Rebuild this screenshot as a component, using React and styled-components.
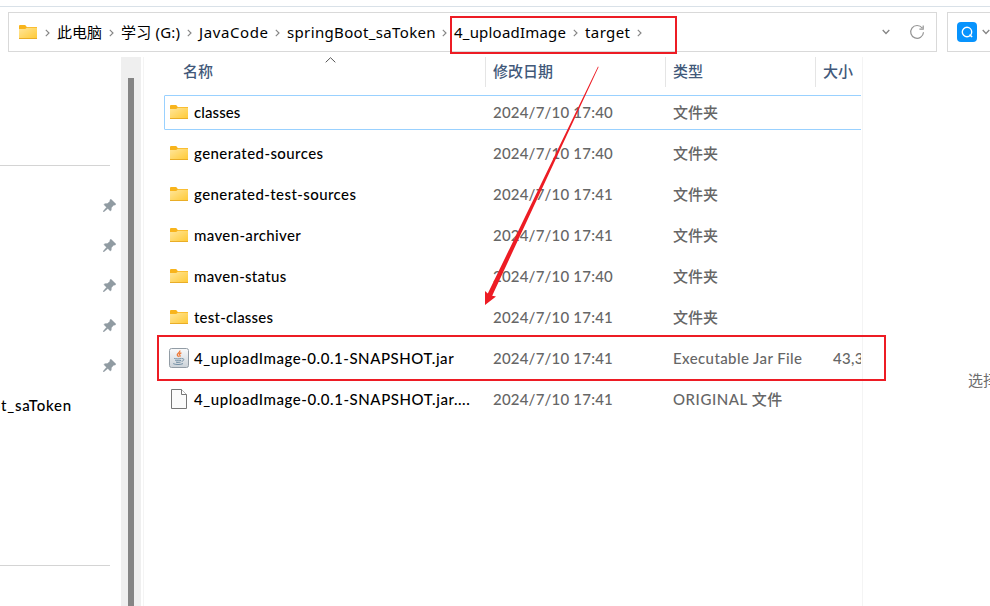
import React from 'react';
import styled, { createGlobalStyle } from 'styled-components';

const GlobalStyle = createGlobalStyle`
  * { box-sizing: border-box; }
  body { margin: 0; background: #fff; overflow: hidden; }
`;

const uiFont = '"Noto Sans", "Noto Sans CJK SC", sans-serif';
const listFont = 'Lato, "Noto Sans CJK SC", sans-serif';

const Explorer = styled.div`
  position: relative;
  width: 990px;
  height: 606px;
  overflow: hidden;
  display: flex;
  flex-direction: column;
  background: #fff;
  color: #000;
  svg { display: block; flex: none; }
`;

const Toolbar = styled.header`
  flex: none;
  height: 57px;
  padding: 5px 0 5px 8px;
  display: flex;
  gap: 10px;
  background: linear-gradient(#d9e1e8, #d9e1e8) 0 6px / 100% 1px no-repeat;
`;

const AddressBar = styled.nav`
  width: 929px;
  height: 40px;
  margin-top: 7px;
  flex: none;
  border: 1px solid #d9d9d9;
  padding: 0 11px 0 10px;
  display: flex;
  align-items: center;
  font: 15px/38px ${uiFont};
`;

const SearchBox = styled(AddressBar)`
  width: 60px;
  padding: 0 0 0 9px;
  gap: 5px;
`;

const Crumb = styled.span`
  flex: none;
  width: ${(p) => p.$width}px;
  height: 38px;
  display: flex;
  align-items: center;
  white-space: nowrap;
  letter-spacing: ${(p) => p.$track || 0}px;
`;

const CrumbSeparator = styled.span`
  flex: none;
  width: ${(p) => (p.$first ? 20 : 19)}px;
  display: flex;
  justify-content: center;
  padding-top: 1px;
`;

const BarActions = styled.div`
  margin-left: auto;
  display: flex;
  align-items: center;
  gap: 19px;
`;

const Workspace = styled.div`
  flex: 1;
  min-height: 0;
  display: flex;
`;

const Sidebar = styled.aside`
  width: 121px;
  flex: none;
  overflow: hidden;
  display: flex;
  flex-direction: column;
`;

const Divider = styled.div`
  flex: none;
  width: 110px;
  height: 1px;
  margin-top: ${(p) => p.$top}px;
  background: #d4d4d4;
`;

const PinnedList = styled.div`
  margin-top: 19px;
  flex: none;
`;

const PinnedItem = styled.div`
  height: 40px;
  padding: 0 5px 0 0;
  display: flex;
  align-items: center;
  justify-content: flex-end;
`;

const TreeItem = styled.div`
  flex: none;
  width: 72px;
  height: 40px;
  display: flex;
  justify-content: flex-end;
  align-items: center;
  white-space: nowrap;
  font: 500 15px/20px ${listFont};
  letter-spacing: 0.8px;
`;

const Scrollbar = styled.div`
  width: 20px;
  flex: none;
  background: #efefef;
  padding: 21px 7px 0;
`;

const Thumb = styled.div`
  height: 100%;
  background: #858585;
`;

const FilePane = styled.main`
  flex: none;
  width: 720px;
  margin-left: 2px;
  border-left: 1px solid #f4f4f4;
  border-right: 1px solid #f4f4f4;
  overflow: hidden;
`;

const ColumnHeaders = styled.div`
  height: 30px;
  margin-left: 20px;
  display: grid;
  grid-template-columns: 322px 180px 150px 90px;
  color: #42597a;
  font: 500 15px/29px ${listFont};
`;

const ColumnHeader = styled.div`
  display: flex;
  justify-content: space-between;
  border-right: 1px solid #e5e5e5;
  padding-left: ${(p) => (p.$first ? 19 : 7)}px;
  padding-right: ${(p) => (p.$first ? 149 : 0)}px;
`;

const Rows = styled.div`
  padding: 5px 0 0 20px;
  width: 717px;
  overflow: hidden;
`;

const FileRow = styled.div`
  width: 741px;
  height: 41px;
  display: grid;
  grid-template-columns: 321px 180px 150px 90px;
  align-items: center;
  color: #666;
  font: 500 15px/24px ${listFont};
  white-space: nowrap;
  border: 1px solid transparent;
  border-width: 2px 1px 4px;
  ${(p) => p.$focused && `
    height: 35px;
    margin: 3px 0;
    border: 1px solid #99d1ff;
    padding-bottom: 2px;
    border-radius: 1px;
  `}
`;

const FileName = styled.div`
  display: flex;
  align-items: center;
  color: #000;
  padding-left: 4px;
`;

const IconSlot = styled.span`
  width: 25px;
  flex: none;
  padding-left: ${(p) => (p.$folder ? 1 : 0)}px;
`;

const Label = styled.span`
  letter-spacing: ${(p) => p.$track || 0}px;
`;

const Cell = styled.div`
  padding-left: ${(p) => p.$pad || 7}px;
  letter-spacing: ${(p) => p.$track || 0}px;
`;

const Preview = styled.section`
  flex: 1;
  min-width: 0;
  padding: 311px 0 0 105px;
  overflow: hidden;
  white-space: nowrap;
  color: #6d6d6d;
  font: 15px/24px "Noto Sans CJK SC", sans-serif;
`;

const Highlight = styled.div`
  position: absolute;
  left: ${(p) => p.$x}px;
  top: ${(p) => p.$y}px;
  width: ${(p) => p.$w}px;
  height: ${(p) => p.$h}px;
  border: 2px solid #ed1c24;
`;

const Arrow = styled.svg`
  position: absolute;
  left: 480px;
  top: 60px;
`;

const FolderIcon = () => (
  <svg width="18" height="14" viewBox="0 0 18 14">
    <defs>
      <linearGradient id="folderFace" x1="0" y1="0" x2="1" y2="1">
        <stop offset="0" stopColor="#ffe69b" />
        <stop offset="1" stopColor="#ffc933" />
      </linearGradient>
    </defs>
    <path d="M0 1q0-1 1-1h5.2l1.6 2H18v3H0z" fill="#f8b41c" />
    <path d="M0 4h6.2l1.6-1.2H18V14H0z" fill="url(#folderFace)" />
    <path d="M0 13.5h18" stroke="#e9ad27" />
  </svg>
);

const ChevronRight = () => (
  <svg width="5" height="8" viewBox="0 0 5 8" fill="none" stroke="#858585" strokeWidth="1.15">
    <path d="M.8.8 4 4 .8 7.2" />
  </svg>
);

const ChevronDown = () => (
  <svg width="8" height="6" viewBox="0 0 8 6" fill="none" stroke="#858585" strokeWidth="1.3">
    <path d="M.7 1 4 4.5 7.3 1" />
  </svg>
);

const RefreshIcon = () => (
  <svg width="16" height="16" viewBox="0 0 16 16" fill="none" stroke="#949494" strokeWidth="1.2">
    <path d="M13.2 4A6.4 6.4 0 1 0 14.5 8.3M14.2 1.6v3.6h-3.8" />
  </svg>
);

const SearchIcon = () => (
  <svg width="20" height="20" viewBox="0 0 20 20" fill="none">
    <rect width="20" height="20" rx="4" fill="#0793fd" />
    <circle cx="10" cy="10" r="4.7" stroke="#fff" strokeWidth="1.4" />
    <path d="m12.5 12.6 2.6 2.4" stroke="#fff" strokeWidth="1.5" />
  </svg>
);

const SortArrow = () => (
  <svg width="11" height="6" viewBox="0 0 11 6" fill="none" stroke="#555">
    <path d="m.7 5.3 4.8-4.6 4.8 4.6" />
  </svg>
);

const PinIcon = () => (
  <svg width="13" height="13" viewBox="0 0 13 13" fill="#909ba2">
    <path d="M8 .2 12.9 5.1 12.3 6 10.5 6.2 8.4 8.7 8.2 11.3 7.3 12 4.8 9.5.6 13 0 12.4 3.5 8.2 1 5.7 1.7 4.7 4.4 4.6 6.8 2.5 7 .8Z" stroke="#909ba2" strokeWidth=".4" />
  </svg>
);

const JarIcon = () => (
  <svg width="20" height="20" viewBox="0 0 20 20" fill="none">
    <defs>
      <linearGradient id="jarTile" x1="0" y1="0" x2="0" y2="1">
        <stop offset="0" stopColor="#f9fafb" />
        <stop offset="1" stopColor="#cbd2d8" />
      </linearGradient>
    </defs>
    <rect x=".5" y=".5" width="19" height="19" rx="2" fill="url(#jarTile)" stroke="#929ca5" />
    <path d="M10.8 2.6c.8 2-3.3 2.6-2.5 4.4.3.8 1.2 1.1 1 2M12.4 4.9c-2 .6-2.7 1.3-1.5 2.3.4.5.2 1-.3 1.5" stroke="#ee7938" strokeWidth="1.3" />
    <path d="M5.2 10.4c1.3.7 5.9.7 7.4 0M6.2 12.3c1.3.6 4.6.6 6 0M7 14.1c1.2.5 3.3.5 4.6 0M13 10.6c2.7-.3 2.2 2.2-.3 2.8M4.2 15.6c2 1.2 7.5 1.2 9.8 0" stroke="#66869d" strokeWidth=".9" />
  </svg>
);

const FileIcon = () => (
  <svg width="20" height="20" viewBox="0 0 20 20" fill="#fbfbfb" stroke="#777">
    <path d="M2.5.5h10l5 5v14h-15z" />
    <path d="M12.5.5v5h5" fill="#fff" />
  </svg>
);

const crumbs = [
  { text: '此电脑', width: 45 },
  { text: '学习 (G:)', width: 59, track: 0.2 },
  { text: 'JavaCode', width: 69, track: 0.6 },
  { text: 'springBoot_saToken', width: 148, track: 0.35 },
  { text: '4_uploadImage', width: 112, track: 0.2 },
  { text: 'target', width: 45, track: 0.4 },
];

const files = [
  { name: 'classes', time: '17:40', focused: true, track: 0.1 },
  { name: 'generated-sources', time: '17:40', track: 0.43 },
  { name: 'generated-test-sources', time: '17:41', track: 0.42 },
  { name: 'maven-archiver', time: '17:41', track: 0.35 },
  { name: 'maven-status', time: '17:40', track: 0.3 },
  { name: 'test-classes', time: '17:41', track: 0.22 },
  { name: '4_uploadImage-0.0.1-SNAPSHOT.jar', time: '17:41', track: 0.55, icon: JarIcon, type: 'Executable Jar File', typeTrack: 0.4, size: '43,3' },
  { name: '4_uploadImage-0.0.1-SNAPSHOT.jar....', time: '17:41', track: 0.56, icon: FileIcon, type: 'ORIGINAL 文件', typeTrack: 0.55 },
];

export default function App() {
  return (
    <Explorer>
      <GlobalStyle />
      <Toolbar>
        <AddressBar>
          <FolderIcon />
          <CrumbSeparator $first><ChevronRight /></CrumbSeparator>
          {crumbs.map((c) => (
            <React.Fragment key={c.text}>
              <Crumb $width={c.width} $track={c.track}>{c.text}</Crumb>
              <CrumbSeparator><ChevronRight /></CrumbSeparator>
            </React.Fragment>
          ))}
          <BarActions>
            <ChevronDown />
            <RefreshIcon />
          </BarActions>
        </AddressBar>
        <SearchBox as="div">
          <SearchIcon />
          <ChevronDown />
        </SearchBox>
      </Toolbar>
      <Workspace>
        <Sidebar>
          <Divider $top={108} />
          <PinnedList>
            {[0, 1, 2, 3, 4].map((n) => <PinnedItem key={n}><PinIcon /></PinnedItem>)}
          </PinnedList>
          <TreeItem>springBoot_saToken</TreeItem>
          <Divider $top={140} />
        </Sidebar>
        <Scrollbar><Thumb /></Scrollbar>
        <FilePane>
          <ColumnHeaders>
            <ColumnHeader $first>名称<SortArrow /></ColumnHeader>
            <ColumnHeader>修改日期</ColumnHeader>
            <ColumnHeader>类型</ColumnHeader>
            <ColumnHeader>大小</ColumnHeader>
          </ColumnHeaders>
          <Rows>
            {files.map((f) => {
              const Icon = f.icon || FolderIcon;
              return (
                <FileRow key={f.name} $focused={f.focused}>
                  <FileName>
                    <IconSlot $folder={!f.icon}><Icon /></IconSlot>
                    <Label $track={f.track}>{f.name}</Label>
                  </FileName>
                  <Cell $track={0.2}>2024/7/10 {f.time}</Cell>
                  <Cell $track={f.typeTrack}>{f.type || '文件夹'}</Cell>
                  <Cell $pad={17} $track={0.3}>{f.size}</Cell>
                </FileRow>
              );
            })}
          </Rows>
        </FilePane>
        <Preview>选择</Preview>
      </Workspace>
      <Highlight $x={450} $y={16} $w={227} $h={38} />
      <Highlight $x={157} $y={335} $w={729} $h={46} />
      <Arrow width="130" height="250" viewBox="480 60 130 250">
        <path d="M598 66.5 487.8 293.5 485 291V305l11-8.5-3.8-.8L598.6 67Z" fill="#ed1c24" />
      </Arrow>
    </Explorer>
  );
}
